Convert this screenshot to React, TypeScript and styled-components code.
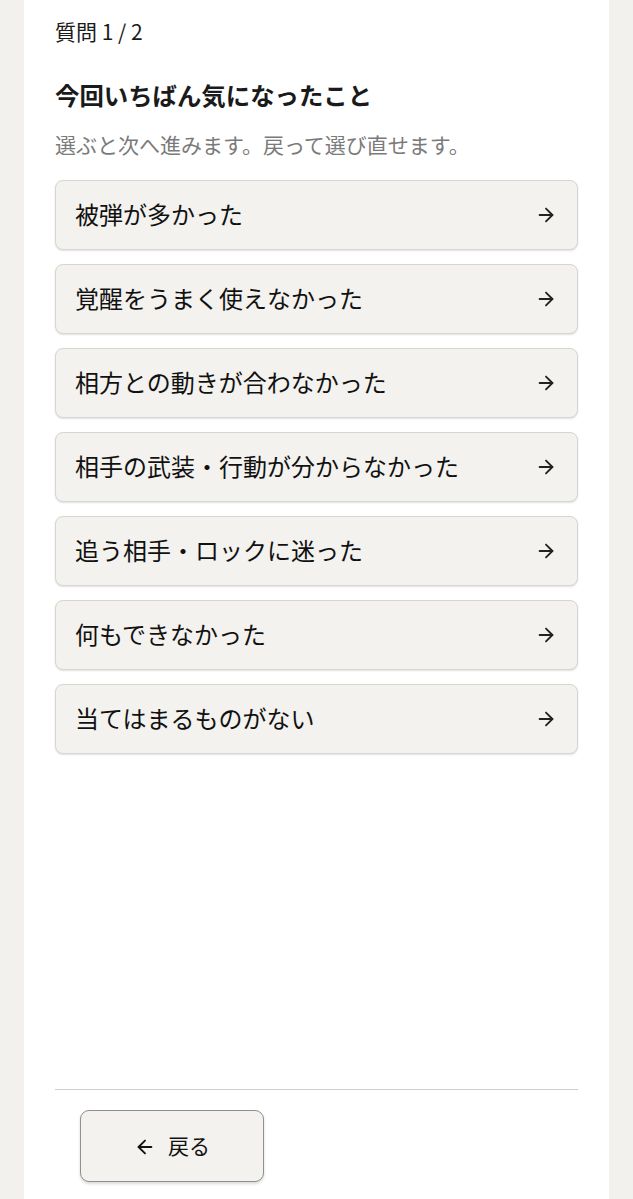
import { ArrowLeft, ArrowRight } from "lucide-react";
import styled, { createGlobalStyle } from "styled-components";

const options = [
  "被弾が多かった",
  "覚醒をうまく使えなかった",
  "相方との動きが合わなかった",
  "相手の武装・行動が分からなかった",
  "追う相手・ロックに迷った",
  "何もできなかった",
  "当てはまるものがない",
];

const GlobalStyle = createGlobalStyle`
  html, body {
    margin: 0;
    padding: 0;
    background: #f2f1ed;
  }
  body {
    font-family: "Noto Sans CJK JP", "Noto Sans", sans-serif;
    color: #222;
  }
  * {
    box-sizing: border-box;
  }
`;

const App = () => {
  return (
    <>
      <GlobalStyle />
      <Panel>
        <Progress>質問 1 / 2</Progress>
        <Title>今回いちばん気になったこと</Title>
        <Hint>選ぶと次へ進みます。戻って選び直せます。</Hint>
        <OptionList>
          {options.map((label) => (
            <OptionButton key={label} type="button">
              <span>{label}</span>
              <ArrowRight size={22} strokeWidth={2} />
            </OptionButton>
          ))}
        </OptionList>
        <Footer>
          <BackButton type="button">
            <ArrowLeft size={22} strokeWidth={2} />
            <span>戻る</span>
          </BackButton>
        </Footer>
      </Panel>
    </>
  );
};

export default App;

const Panel = styled.main`
  display: flex;
  flex-direction: column;
  min-height: 100vh;
  margin: 0 24px;
  padding: 16px 31px 0;
  background: #ffffff;
`;

const Progress = styled.div`
  font-size: 21px;
  line-height: 30px;
  font-weight: 400;
  color: #1a1a1a;
`;

const Title = styled.h1`
  margin: 31px 0 0;
  font-size: 24.4px;
  line-height: 36px;
  font-weight: 700;
  color: #1a1a1a;
`;

const Hint = styled.p`
  margin: 16px 0 0;
  font-size: 21px;
  line-height: 30px;
  color: #7a7a7a;
`;

const OptionList = styled.div`
  display: flex;
  flex-direction: column;
  gap: 14px;
  margin-top: 21px;
  flex: 1;
`;

const OptionButton = styled.button`
  display: flex;
  align-items: center;
  justify-content: space-between;
  height: 70px;
  padding: 0 20px 4px 19px;
  border: 1px solid #d6d5d1;
  border-radius: 8px;
  background: #f3f2ee;
  box-shadow: 0 1px 2px rgba(0, 0, 0, 0.12);
  font-family: inherit;
  font-size: 24px;
  font-weight: 400;
  color: #111;
  text-align: left;
  cursor: pointer;

  svg {
    color: #222;
    flex-shrink: 0;
    margin-top: 4px;
  }
`;

const Footer = styled.div`
  border-top: 1px solid #cfcfcf;
  padding: 20px 0 17px 25px;
`;

const BackButton = styled.button`
  display: flex;
  align-items: center;
  justify-content: center;
  gap: 12px;
  width: 184px;
  height: 72px;
  padding-bottom: 3px;
  border: 1px solid #8f8f8f;
  border-radius: 9px;
  background: #f3f2ee;
  box-shadow: 0 2px 3px rgba(0, 0, 0, 0.15);
  font-family: inherit;
  font-size: 21px;
  color: #111;
  cursor: pointer;

  svg {
    margin-top: 3px;
  }
`;
